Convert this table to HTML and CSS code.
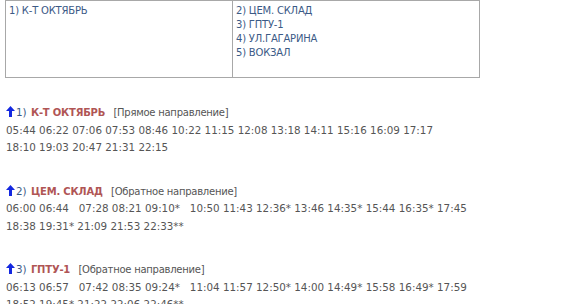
FILE: index.html
```html
<!DOCTYPE html>
<html>
<head>
<meta charset="utf-8">
<link rel="stylesheet" href="styles.css">
</head>
<body>
<table class="stops">
  <tr>
    <td class="cell cell-left">1) К-Т ОКТЯБРЬ</td>
    <td class="cell cell-right">2) ЦЕМ. СКЛАД<br>3) ГПТУ-1<br>4) УЛ.ГАГАРИНА<br>5) ВОКЗАЛ</td>
  </tr>
</table>

<div class="route">
  <div class="head"><svg class="arrow" width="9" height="11" viewBox="0 0 9 11"><path d="M4.5 0 L9 5 L6 5 L6 11 L3 11 L3 5 L0 5 Z" fill="#1428e0"/></svg><span class="num">1)</span> <b class="name">К-Т ОКТЯБРЬ</b> <span class="dir">[Прямое направление]</span></div>
  <div class="times">05:44 06:22 07:06 07:53 08:46 10:22 11:15 12:08 13:18 14:11 15:16 16:09 17:17</div>
  <div class="times">18:10 19:03 20:47 21:31 22:15</div>
</div>

<div class="route">
  <div class="head"><svg class="arrow" width="9" height="11" viewBox="0 0 9 11"><path d="M4.5 0 L9 5 L6 5 L6 11 L3 11 L3 5 L0 5 Z" fill="#1428e0"/></svg><span class="num">2)</span> <b class="name">ЦЕМ. СКЛАД</b> <span class="dir">[Обратное направление]</span></div>
  <div class="times">06:00 06:44   07:28 08:21 09:10*   10:50 11:43 12:36* 13:46 14:35* 15:44 16:35* 17:45</div>
  <div class="times">18:38 19:31* 21:09 21:53 22:33**</div>
</div>

<div class="route">
  <div class="head"><svg class="arrow" width="9" height="11" viewBox="0 0 9 11"><path d="M4.5 0 L9 5 L6 5 L6 11 L3 11 L3 5 L0 5 Z" fill="#1428e0"/></svg><span class="num">3)</span> <b class="name">ГПТУ-1</b> <span class="dir">[Обратное направление]</span></div>
  <div class="times">06:13 06:57   07:42 08:35 09:24*   11:04 11:57 12:50* 14:00 14:49* 15:58 16:49* 17:59</div>
  <div class="times">18:52 19:45* 21:22 22:06 22:46**</div>
</div>
</body>
</html>
```
FILE: styles.css
```css
body {
  margin: 0;
  padding: 0 0 0 5px;
  font-family: "DejaVu Sans", Verdana, sans-serif;
  font-size: 10.35px;
  color: #555;
  background: #fff;
}
.stops {
  border-collapse: collapse;
  width: 475px;
  height: 78px;
  margin-bottom: 26px;
}
.cell {
  border: 1px solid #a8a8a8;
  vertical-align: top;
  padding: 3px 3px;
  line-height: 14px;
  color: #3b5a86;
  font-size: 10px;
  letter-spacing: -0.2px;
}
.cell-left { width: 220px; }
.route {
  line-height: 17.5px;
  margin-bottom: 26px;
}
.head {
  padding-left: 1px;
  white-space: nowrap;
}
.arrow { vertical-align: -1px; margin-right: 1px; }
.num { color: #3b5a86; }
.name { color: #b05555; font-weight: bold; margin-left: 1px; margin-right: 5px; font-size: 10px; letter-spacing: -0.2px; }
.dir { font-size: 10px; letter-spacing: -0.25px; }
.times { color: #555; padding-left: 1px; white-space: pre; }
```
